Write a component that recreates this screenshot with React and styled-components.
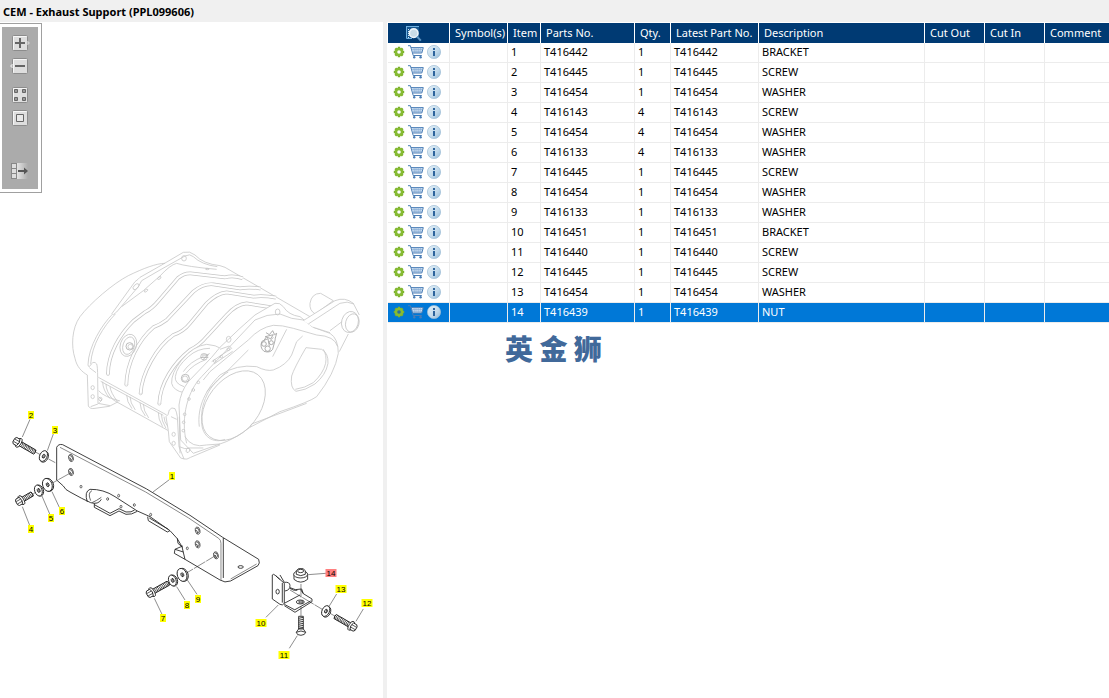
import React, { useState } from 'react';
import styled, { createGlobalStyle } from 'styled-components'

const parts = [
  { item: 1, no: 'T416442', qty: 1, desc: 'BRACKET' },
  { item: 2, no: 'T416445', qty: 1, desc: 'SCREW' },
  { item: 3, no: 'T416454', qty: 1, desc: 'WASHER' },
  { item: 4, no: 'T416143', qty: 4, desc: 'SCREW' },
  { item: 5, no: 'T416454', qty: 4, desc: 'WASHER' },
  { item: 6, no: 'T416133', qty: 4, desc: 'WASHER' },
  { item: 7, no: 'T416445', qty: 1, desc: 'SCREW' },
  { item: 8, no: 'T416454', qty: 1, desc: 'WASHER' },
  { item: 9, no: 'T416133', qty: 1, desc: 'WASHER' },
  { item: 10, no: 'T416451', qty: 1, desc: 'BRACKET' },
  { item: 11, no: 'T416440', qty: 1, desc: 'SCREW' },
  { item: 12, no: 'T416445', qty: 1, desc: 'SCREW' },
  { item: 13, no: 'T416454', qty: 1, desc: 'WASHER' },
  { item: 14, no: 'T416439', qty: 1, desc: 'NUT' },
];

// center of each callout on the drawing
const callouts = [
  { n: 1, x: 172, y: 476 },
  { n: 2, x: 31, y: 415 },
  { n: 3, x: 55, y: 430 },
  { n: 4, x: 31, y: 529 },
  { n: 5, x: 51, y: 518 },
  { n: 6, x: 62, y: 511 },
  { n: 7, x: 163, y: 618 },
  { n: 8, x: 187, y: 605 },
  { n: 9, x: 198, y: 599 },
  { n: 10, x: 261, y: 623 },
  { n: 11, x: 284, y: 655 },
  { n: 12, x: 367, y: 603 },
  { n: 13, x: 341, y: 589 },
  { n: 14, x: 331, y: 573 },
];

const ribs = [
  { x: 144, y: 402, d: 'M144 402 C144 342 180 282 220 243 L254 217 Q275 207 295 183 L354 114 Q372 99 392 100 L495 112 Q520 105 548 115' },
  { x: 199, y: 434, d: 'M199 434 C200 370 235 300 280 262 Q300 255 320 240 L400 155 Q430 130 460 133 L540 145 Q570 140 602 146' },
  { x: 242, y: 460, d: 'M242 460 C245 400 290 320 340 285 Q370 275 390 250 L440 190 Q470 160 500 157 L580 170 Q610 166 648 173' },
  { x: 298, y: 491, d: 'M298 491 C300 430 340 370 390 330 Q420 315 440 290 L500 225 Q530 192 560 190 L640 203 L660 202' },
];

const Tank = () => (
  <g transform="translate(60 240) scale(.3333)" fill="none" stroke="#c6c6c6" strokeWidth="2.4">
    <path d="M315 70 C290 70 250 85 205 107 C160 130 90 190 60 230 C35 265 33 320 45 355 C50 380 65 395 82 405" />
    <path d="M158 222 C125 255 85 320 84 375 M166 222 C130 260 95 315 92 372" />
    <path d="M155 222 L225 125 Q235 118 240 112 L300 78 L370 37 Q390 32 405 45 Q430 72 480 77 L495 82 L750 230" />
    <path d="M160 224 L170 216 L235 140 L245 122 L300 90 L375 48 Q390 40 400 50 Q425 74 472 80" />
    <path d="M185 200 L250 152 L300 108 Q330 75 350 70 Q380 80 470 88" />
    <ellipse cx="372" cy="55" rx="7" ry="8" />
    <ellipse cx="228" cy="140" rx="11" ry="6" transform="rotate(-45 228 140)" />
    <ellipse cx="258" cy="152" rx="6" ry="3" transform="rotate(-35 258 152)" />
    <ellipse cx="298" cy="114" rx="6" ry="3" transform="rotate(-35 298 114)" />
    <ellipse cx="442" cy="87" rx="6" ry="2" />
    {ribs.map(r => (
      <g key={r.x}>
        <circle cx={r.x} cy={r.y} r="4.4" strokeWidth="2.2" />
        <path d={r.d} strokeWidth="11" />
        <path d={r.d} stroke="#fff" strokeWidth="6.6" />
      </g>
    ))}
    {/* bosses */}
    <ellipse cx="205" cy="316" rx="24" ry="34" transform="rotate(18 205 316)" />
    <ellipse cx="206" cy="317" rx="17" ry="27" transform="rotate(18 206 317)" />
    <circle cx="209" cy="319" r="11" stroke="#aaa" />
    <circle cx="211" cy="320" r="7" />
    <path fill="#fff" d="M372 458 Q340 452 335 430 Q333 400 365 360 Q400 318 440 313 Q470 316 482 325 L470 350 Z" />
    <path d="M372 440 Q343 430 346 410 Q350 380 385 350 Q412 325 450 325 M370 395 Q390 365 430 350 M378 400 Q400 372 440 358" />
    <circle cx="376" cy="415" r="12" stroke="#aaa" />
    <circle cx="375" cy="416" r="8" />
    <circle cx="432" cy="350" r="10" />
    <path stroke="#aaa" d="M425 345 L445 345 M422 352 L445 352 M428 360 L448 340" />
    {/* underside drum */}
    <path d="M115 412 L320 525 M122 424 L310 526 M116 452 Q130 470 180 483 M160 480 L325 572" />
    <path d="M128 425 Q128 450 150 476 M138 432 Q138 455 160 480 M150 440 Q152 458 172 484 M200 465 Q200 485 216 506 M210 470 Q210 488 226 510 M240 488 Q240 508 256 528 M250 492 Q250 512 266 534 M295 518 Q294 536 308 560 M304 522 Q304 542 318 565 M312 530 Q312 546 324 560" />
    {/* left leg */}
    <path d="M84 375 Q86 386 94 372 Q102 362 110 372 Q113 380 113 412 L114 490 L150 497 M82 405 L85 498 Q90 508 105 505 L148 499 L175 485 M88 383 L108 398 M92 500 L114 492 M116 470 L126 480 L118 488" />
    <ellipse cx="98" cy="443" rx="5" ry="6" />
    <ellipse cx="98" cy="470" rx="5" ry="6" />
    <circle cx="121" cy="477" r="5" />
    {/* end cover */}
    <path fill="#fff" d="M357 495 Q362 455 385 425 L455 352 L480 322 L540 265 L585 225 L645 190 Q660 187 670 200 Q685 225 720 230 L760 262 L810 280 Q835 295 835 340 Q825 400 770 470 Q750 485 660 515 L570 562 Q520 600 480 612 L400 640 L362 600 Z" />
    <path d="M380 610 C360 530 385 450 425 410 L500 330 L585 240 Q620 222 660 222 L695 235 L730 240 L760 262" />
    <path d="M430 420 L450 395 L565 300 Q600 262 640 256 Q665 255 700 265 L770 285 Q825 288 833 320" />
    <path d="M418 560 C410 500 440 445 480 405 Q530 372 590 380 Q620 395 640 390 Q680 375 695 345 L710 305 L728 288" />
    <path d="M570 562 L575 552 L740 490 M375 590 Q395 625 440 615 L480 612 M440 455 L565 330" />
    <ellipse cx="521" cy="497" rx="118" ry="78" transform="rotate(-52 521 497)" />
    <path d="M425 545 C425 590 460 612 495 598 M425 545 C420 480 460 420 505 396" />
    <ellipse cx="506" cy="298" rx="7" ry="9" />
    <ellipse cx="653" cy="216" rx="7" ry="9" />
    <path d="M455 365 L515 325 L508 318 L480 328 M462 372 L518 334" />
    {[[464, 363], [484, 350], [505, 328], [415, 427], [400, 450], [387, 477], [374, 523], [371, 547], [370, 572]].map(([x, y]) => (
      <circle key={y} cx={x} cy={y} r="4" />
    ))}
    <path d="M738 323 L785 328 Q806 340 804 370 Q798 405 765 432 Q735 452 708 454 Q690 445 695 408 Q702 385 738 323 Z" />
    <path d="M790 328 Q801 345 797 370 Q790 400 760 428 Q735 444 706 448" />
    <path d="M680 268 L638 350" />
    <g stroke="#999">
      <path d="M618 278 L628 284 L638 272 L644 284 L650 280 L645 298 M616 290 L640 284 L632 296 Z M606 304 Q598 322 612 334 Q630 340 638 328 L646 298 M606 304 L624 296 L628 318 M612 302 L618 292 M632 300 L640 292" />
      <circle cx="612" cy="312" r="7" />
      <circle cx="623" cy="326" r="8" />
      <circle cx="634" cy="308" r="6" />
    </g>
    {/* outlet pipe */}
    <path fill="#fff" d="M820 182 L782 160 Q755 160 750 190 Q748 212 766 222 Z" />
    <path fill="#fff" stroke="none" d="M730 242 L825 182 Q855 170 880 190 L898 225 L850 275 L810 278 L760 262 Z" />
    <path d="M730 242 L825 182 Q855 170 880 190 L898 225 M760 262 L810 278" />
    <path d="M745 252 L840 190 Q862 182 882 192 M810 272 L846 245 M865 282 L838 335" />
    <ellipse cx="870" cy="246" rx="25" ry="32" transform="rotate(15 870 246)" fill="#fff" />
    <ellipse cx="877" cy="249" rx="20" ry="28" transform="rotate(15 877 249)" />
    {/* right leg */}
    <path fill="#fff" d="M318 530 Q325 528 328 510 Q335 500 345 506 Q350 515 352 530 L357 620 L372 657 L362 654 L328 605 L325 572 Z" />
    <path d="M372 657 Q380 660 392 652 L480 615 M358 530 L360 640 M358 620 Q375 630 390 624 L430 624 M333 530 L350 538" />
    <ellipse cx="341" cy="583" rx="5" ry="6" />
    <ellipse cx="341" cy="610" rx="5" ry="6" />
    <ellipse cx="384" cy="631" rx="5" ry="7" transform="rotate(30 384 631)" />
  </g>
);

const Bolt = ({ x, y, angle, length }) => {
  const turns = [];
  for (let i = 15; i < length; i += 5) turns.push(i);
  return (
    <g transform={`translate(${x} ${y}) rotate(${angle})`}>
      <path fill="#fff" d={`M8 -7 H${length - 2} L${length} 0 L${length - 2} 7 H8 Z`} />
      {turns.map(i => <path key={i} strokeWidth="2.2" d={`M${i} -7 Q${i + 4} 0 ${i + 1} 7`} />)}
      <ellipse cx="5" cy="0" rx="7" ry="15" fill="#fff" />
      <path fill="#fff" d="M3 -11 L-8 -11 L-12 -6 V6 L-8 11 L3 11 Q9 0 3 -11 Z" />
      <path d="M-11 -4 H5 M-11 4 H5" strokeWidth="2" />
    </g>
  );
};

const Washer = ({ x, y, r, angle }) => (
  <g transform={`translate(${x} ${y}) rotate(${angle})`}>
    <ellipse cx="1" cy="1" rx={r - 5} ry={r} fill="#fff" />
    <ellipse cx="-2" rx={r - 6} ry={r} fill="#fff" />
    <ellipse cx="-1" rx="4" ry="6" />
    <path d="M-2 -4 Q2 0 -1 5" />
  </g>
);

const Hole = ({ x, y }) => (
  <g transform={`translate(${x} ${y}) rotate(-15)`}>
    <ellipse rx="7" ry="11" strokeWidth="2" />
    <path strokeWidth="2" d="M-3 -9 L4 -4 V3 L-2 8 V0 L-6 -2" />
  </g>
);

const Brackets = () => (
  <g transform="translate(0 400) scale(.3333)" fill="none" stroke="#222" strokeWidth="2.6">
    {/* leader lines */}
    <g stroke="#555" strokeWidth="2">
      <path d="M90 58 L67 111 M160 102 L142 152 M508 239 L459 276 M178 322 L156 275 M150 344 L125 286 M89 376 L67 320" />
      <path d="M487 645 L463 595 M555 600 L530 560 M591 583 L562 540 M798 652 L835 615 M868 745 L892 707 M1090 627 L1068 664 M1010 582 L988 618 M978 520 L925 524" />
      <path d="M108 157 L166 188 M100 281 L213 218 M508 550 L648 466 M903 552 V595 M903 620 V648 M870 570 L970 630 M990 640 L1008 650" strokeDasharray="40 3" />
    </g>
    <path d="M170 240 V142 Q175 131 188 134 L440 267 L570 346 L668 412 L776 478 Q781 490 774 497 L692 543 Q674 550 660 540 L555 478" />
    <path stroke="#777" d="M180 142 L437 276 L566 354 L656 415 Q663 420 663 430 V540 M692 537 L770 492" />
    <path d="M670 414 V534" />
    <path d="M170 240 L190 258 Q196 270 210 276 L245 295 L272 308 Q295 315 304 298 M262 306 Q252 275 270 268 Q310 267 345 290 L412 333 L450 350 L510 392 Q535 415 546 440 L555 478" />
    <path stroke="#555" d="M272 302 Q262 278 276 272 M276 308 Q290 302 304 292" />
    <path d="M283 310 V322 L330 347 L357 333 L378 343 Q395 345 412 334 M283 314 L330 340 L357 326 L378 336 Q395 338 404 330" />
    <path d="M443 350 L445 362 L502 396 L510 392 M448 354 L505 388" />
    <path d="M532 415 L534 430 L548 442 M548 438 L525 448 L523 460 L555 478 M525 448 L550 456" />
    <Hole x={213} y={174} />
    <Hole x={213} y={216} />
    <Hole x={593} y={392} />
    <Hole x={593} y={433} />
    <Hole x={648} y={466} />
    <ellipse cx="722" cy="501" rx="8" ry="4" />
    {[[243, 260], [323, 297], [356, 287], [363, 320], [403, 315], [452, 344], [562, 445]].map(([x, y]) => (
      <ellipse key={x} cx={x} cy={y} rx="3" ry="4" strokeWidth="2" />
    ))}
    <Bolt x={52} y={126} angle={30} length={62} />
    <Bolt x={60} y={303} angle={-30} length={44} />
    <Bolt x={452} y={579} angle={-29} length={62} />
    <Bolt x={1058} y={680} angle={210} length={62} />
    <Washer x={132} y={169} r={17} angle={25} />
    <Washer x={117} y={271} r={17} angle={-20} />
    <Washer x={144} y={254} r={20} angle={-20} />
    <Washer x={519} y={541} r={17} angle={-20} />
    <Washer x={548} y={524} r={20} angle={-20} />
    <Washer x={979} y={634} r={17} angle={25} />
    <g transform="translate(720 465)">
      <path d="M97 60 Q100 55 107 62 L133 85 V145 Q128 153 120 148 L97 132 Z" />
      <path d="M127 84 V143 M107 62 L112 66 L120 74 M120 60 L133 82 Q150 80 150 92 Q150 106 135 108 M150 98 Q165 108 185 102 L190 116 L216 132 V140 L165 172 L133 152 M190 116 L182 104 M165 164 L212 138 M150 100 Q160 108 172 106" />
      <path d="M133 145 L180 120 M133 148 L165 165" />
      <ellipse cx="113" cy="110" rx="5" ry="7" />
      <ellipse cx="181" cy="141" rx="12" ry="6" />
      <ellipse cx="183" cy="141" rx="7" ry="3" />
      {/* nut */}
      <path fill="#fff" d="M162 58 V73 Q182 90 203 73 V58 Z" />
      <ellipse cx="182" cy="58" rx="21" ry="11" fill="#fff" />
      <path fill="#fff" d="M169 58 V47 L176 41 H189 L196 47 V58 Q182 66 169 58 Z" />
      <ellipse cx="182" cy="48" rx="9" ry="5" />
      {/* countersunk screw */}
      <path fill="#fff" d="M176 184 H190 V222 H176 Z" />
      <path d="M176 190 L190 187 M176 196 L190 193 M176 202 L190 199 M176 208 L190 205 M176 214 L190 211 M176 220 L190 217" />
      <path fill="#fff" d="M176 222 L169 232 Q170 241 183 241 Q196 240 197 232 L190 222 Z" />
      <path d="M169 232 Q183 224 197 232" />
    </g>
  </g>
);

const Drawing = ({ selected }) => (
  <DrawingSvg viewBox="0 193 383 505" role="img" aria-label="Exhaust Support">
    <Tank />
    <Brackets />
    {callouts.map(c => {
      const w = c.n > 9 ? 11 : 6;
      return (
        <g key={c.n}>
          <rect x={c.x - w / 2} y={c.y - 4} width={w} height="8" fill={c.n === selected ? '#ff7f7f' : '#ffff00'} />
          <CalloutText x={c.x} y={c.y + 3}>{c.n}</CalloutText>
        </g>
      );
    })}
  </DrawingSvg>
);

const GearIcon = ({ hole }) => (
  <svg width="12" height="12" viewBox="0 0 12 12">
    <path stroke="#7cb02c" strokeWidth="2.4" d="M6 .8 V11.2 M.8 6 H11.2 M2.3 2.3 L9.7 9.7 M9.7 2.3 L2.3 9.7" />
    <circle cx="6" cy="6" r="4.3" fill="#86bb32" />
    <circle cx="6" cy="6" r="1.8" fill={hole} />
  </svg>
);

const CartIcon = () => (
  <svg width="16" height="14" viewBox="0 0 16 14" fill="none">
    <path fill="#d3e4f4" d="M3.5 2.5 H15 L13.6 8 H5 Z" />
    <path stroke="#4a7db5" d="M0 .7 H2.4 L5.2 10.5 H13.8 M3 2.6 H15.3 L13.8 8 H5" />
    <path stroke="#7ea5d0" strokeWidth=".6" d="M3.6 4.5 H14.8 M4.2 6.3 H14.3 M6 2.6 L6.5 8 M8 2.6 V8 M10.2 2.6 V8 M12.4 2.6 L12 8" />
    <circle cx="6.2" cy="12.2" r="1.2" fill="#4a7db5" />
    <circle cx="12.6" cy="12.2" r="1.2" fill="#4a7db5" />
  </svg>
);

const InfoIcon = () => (
  <svg width="14" height="14" viewBox="0 0 14 14">
    <defs>
      <linearGradient id="info" x1="0" y1="0" x2="1" y2="1">
        <stop offset="0" stopColor="#e6f1f8" />
        <stop offset=".6" stopColor="#bfd8ea" />
        <stop offset="1" stopColor="#8fb6d4" />
      </linearGradient>
    </defs>
    <circle cx="7" cy="7" r="6.6" fill="url(#info)" stroke="#9dbdd6" strokeWidth=".7" />
    <rect x="6" y="3" width="2" height="2" fill="#2d639c" />
    <rect x="6" y="6" width="2" height="5" fill="#2d639c" />
  </svg>
);

const SearchListIcon = () => (
  <svg width="17" height="17" viewBox="0 0 17 17" fill="none">
    <path fill="#16568f" d="M1 1 H14 V13 H1 Z" />
    <path stroke="#6fb0e0" d="M1.5 1 V13.5 H7 M1 1.5 H14" />
    <path stroke="#d5e9f7" strokeDasharray="1 1" d="M3.5 4 V13" />
    <circle cx="8.7" cy="8.2" r="4.3" fill="#c9dce8" stroke="#eef5fa" strokeWidth="1.6" />
    <path stroke="#5f96c4" strokeWidth="2" d="M12 11.500 L15.800 15.600" />
  </svg>
);

const toolFrame = (
  <>
    <rect x="2.5" y=".5" width="15" height="15" rx="1" fill="#dedede" stroke="#8c8c8c" />
    <path stroke="#f6f6f6" d="M3.5 14.5 V1.5 H16.5" />
  </>
);

const tools = [
  { label: 'Zoom in', gap: 0, art: <>{toolFrame}<path fill="#dedede" stroke="#c8c8c8" d="M17.5 6 L19.5 8 L17.5 10" /><path stroke="#666" strokeWidth="2" d="M5 8 H15 M10 3 V13" /></> },
  { label: 'Zoom out', gap: 7, art: <>{toolFrame}<path fill="#dedede" stroke="#e4e4e4" d="M2.5 6 L.5 8 L2.5 10" /><path stroke="#666" strokeWidth="2" d="M5 8 H15" /></> },
  { label: 'Show all', gap: 13, art: <>{toolFrame}<path fill="#999" stroke="#666" d="M4.500 2.500 h3 v3 h-3 z M12.500 2.500 h3 v3 h-3 z M4.500 10.500 h3 v3 h-3 z M12.500 10.500 h3 v3 h-3 z" /></> },
  { label: 'Fit', gap: 7, art: <>{toolFrame}<path fill="#e8e8e8" stroke="#666" d="M6.500 4.500 h7 v7 h-7 z" /></> },
  { label: 'Hide list', gap: 37, art: <>
    <defs>
      <linearGradient id="fade"><stop offset="0" stopColor="#e4e4e4" /><stop offset="1" stopColor="#ababab" /></linearGradient>
    </defs>
    <path fill="#dedede" d="M2 1 H6 V15 H2 Z" /><path fill="url(#fade)" d="M7 0 H18 V16 H7 Z" /><path stroke="#888" d="M1.500 .5 V15.500 M6.500 .5 V15.500 M1 .5 H7 M1 5.500 H7 M1 10.500 H7 M1 15.500 H7" /><path stroke="#555" strokeWidth="2" d="M8 8 H16" /><path fill="#555" d="M14 4.500 L18 8 L14 11.500 Z" /></> },
];

const App = () => {
  const [selected, setSelected] = useState(14);

  return (
    <Page>
      <GlobalStyle />
      <TitleBar>CEM - Exhaust Support (PPL099606)</TitleBar>
      <Content>
        <DrawingPane>
          <ToolBox>
            <Tools>
              {tools.map(t => (
                <ToolButton key={t.label} aria-label={t.label} $gap={t.gap}>
                  <svg width="20" height="16" viewBox="0 0 20 16" fill="none">{t.art}</svg>
                </ToolButton>
              ))}
            </Tools>
          </ToolBox>
          <Drawing selected={selected} />
        </DrawingPane>
        <ListPane>
          <Table>
            <colgroup>
              <Col $w={62} />
              <Col $w={58} />
              <Col $w={33} />
              <Col $w={94} />
              <Col $w={36} />
              <Col $w={88} />
              <Col $w={166} />
              <Col $w={60} />
              <Col $w={60} />
              <col />
            </colgroup>
            <thead>
              <tr>
                <HeadCell>
                  <HeadButton aria-label="Search list"><SearchListIcon /></HeadButton>
                </HeadCell>
                <HeadCell>Symbol(s)</HeadCell>
                <HeadCell>Item</HeadCell>
                <HeadCell>Parts No.</HeadCell>
                <HeadCell>Qty.</HeadCell>
                <HeadCell>Latest Part No.</HeadCell>
                <HeadCell>Description</HeadCell>
                <HeadCell>Cut Out</HeadCell>
                <HeadCell>Cut In</HeadCell>
                <HeadCell>Comment</HeadCell>
              </tr>
            </thead>
            <tbody>
              {parts.map(p => (
                <Row key={p.item} $selected={p.item === selected} onClick={() => setSelected(p.item)}>
                  <Cell>
                    <Actions>
                      <IconButton aria-label="Options"><GearIcon hole={p.item === selected ? '#2a6f9c' : '#fff'} /></IconButton>
                      <IconButton aria-label="Add to cart"><CartIcon /></IconButton>
                      <IconButton aria-label="Information"><InfoIcon /></IconButton>
                    </Actions>
                  </Cell>
                  <Cell />
                  <Cell>{p.item}</Cell>
                  <Cell>{p.no}</Cell>
                  <Cell>{p.qty}</Cell>
                  <Cell>{p.no}</Cell>
                  <Cell>{p.desc}</Cell>
                  <Cell />
                  <Cell />
                  <Cell />
                </Row>
              ))}
            </tbody>
          </Table>
          <Brand>英 金 狮</Brand>
        </ListPane>
      </Content>
    </Page>
  );
}

const GlobalStyle = createGlobalStyle`
  * {
    box-sizing: border-box;
  }

  body {
    margin: 0;
    background: #fff;
    color: #000;
    font-family: "Noto Sans", "Open Sans", sans-serif;
    font-size: 11px;
  }

  button {
    display: block;
    padding: 0;
    border: none;
    background: none;
    cursor: pointer;
  }

  svg {
    display: block;
  }
`;

const Page = styled.div`
  display: flex;
  flex-direction: column;
  min-height: 100vh;
`;

const TitleBar = styled.h1`
  margin: 0;
  padding: 2px 3px 0;
  height: 22px;
  line-height: 20px;
  font-size: 11px;
  font-weight: 700;
  background: #f0f0f0;
`;

const Content = styled.div`
  flex: 1;
  display: flex;
`;

const DrawingPane = styled.section`
  flex: 0 0 387px;
  display: flex;
  flex-direction: column;
  align-items: flex-start;
  border-right: 4px solid #f0f0f0;
`;

const ToolBox = styled.div`
  margin-top: 1px;
  padding: 3px 3px 3px 2px;
  border: 1px solid #a0a0a0;
  border-left: none;
`;

const Tools = styled.div`
  padding: 8px 8px 10px;
  background: #ababab;
`;

const ToolButton = styled.button`
  margin-top: ${({ $gap }) => $gap}px;
`;

const DrawingSvg = styled.svg`
  width: 100%;
`;

const CalloutText = styled.text`
  font-family: "Liberation Sans", Arial, sans-serif;
  font-size: 8px;
  text-anchor: middle;
`;

const ListPane = styled.section`
  flex: 1;
  min-width: 0;
  padding: 1px 0 0 1px;
  overflow: hidden;
`;

const Table = styled.table`
  width: 100%;
  table-layout: fixed;
  border-collapse: separate;
  border-spacing: 0;
`;

const Col = styled.col`
  width: ${({ $w }) => $w}px;
`;

const HeadCell = styled.th`
  height: 20px;
  padding: 0 0 0 5px;
  line-height: 18px;
  font-weight: 400;
  text-align: left;
  white-space: nowrap;
  color: #fff;
  background: #003a73;
  border-right: 1px solid #fff;

  &:last-child {
    border-right: none;
  }
`;

const HeadButton = styled.button`
  margin: 0 0 0 12px;
`;

const Cell = styled.td`
  height: 20px;
  padding: 0 0 2px 3px;
  line-height: 17px;
  white-space: nowrap;
  border-right: 1px solid #ececec;
  border-bottom: 1px solid #ececec;

  &:last-child {
    border-right: none;
  }
`;

const Row = styled.tr`
  color: ${({ $selected }) => $selected ? '#fff' : '#000'};
  background: ${({ $selected }) => $selected ? '#0078d7' : '#fff'};
`;

const Actions = styled.div`
  display: flex;
  align-items: center;
  padding-left: 2px;
  gap: 3px;
`;

const IconButton = styled.button`
  flex: none;
`;

const Brand = styled.p`
  margin: 5px 0 0 117px;
  line-height: 40px;
  font-family: "Noto Sans CJK SC", sans-serif;
  font-size: 28px;
  font-weight: 900;
  color: #41699a;
`;

export default App
